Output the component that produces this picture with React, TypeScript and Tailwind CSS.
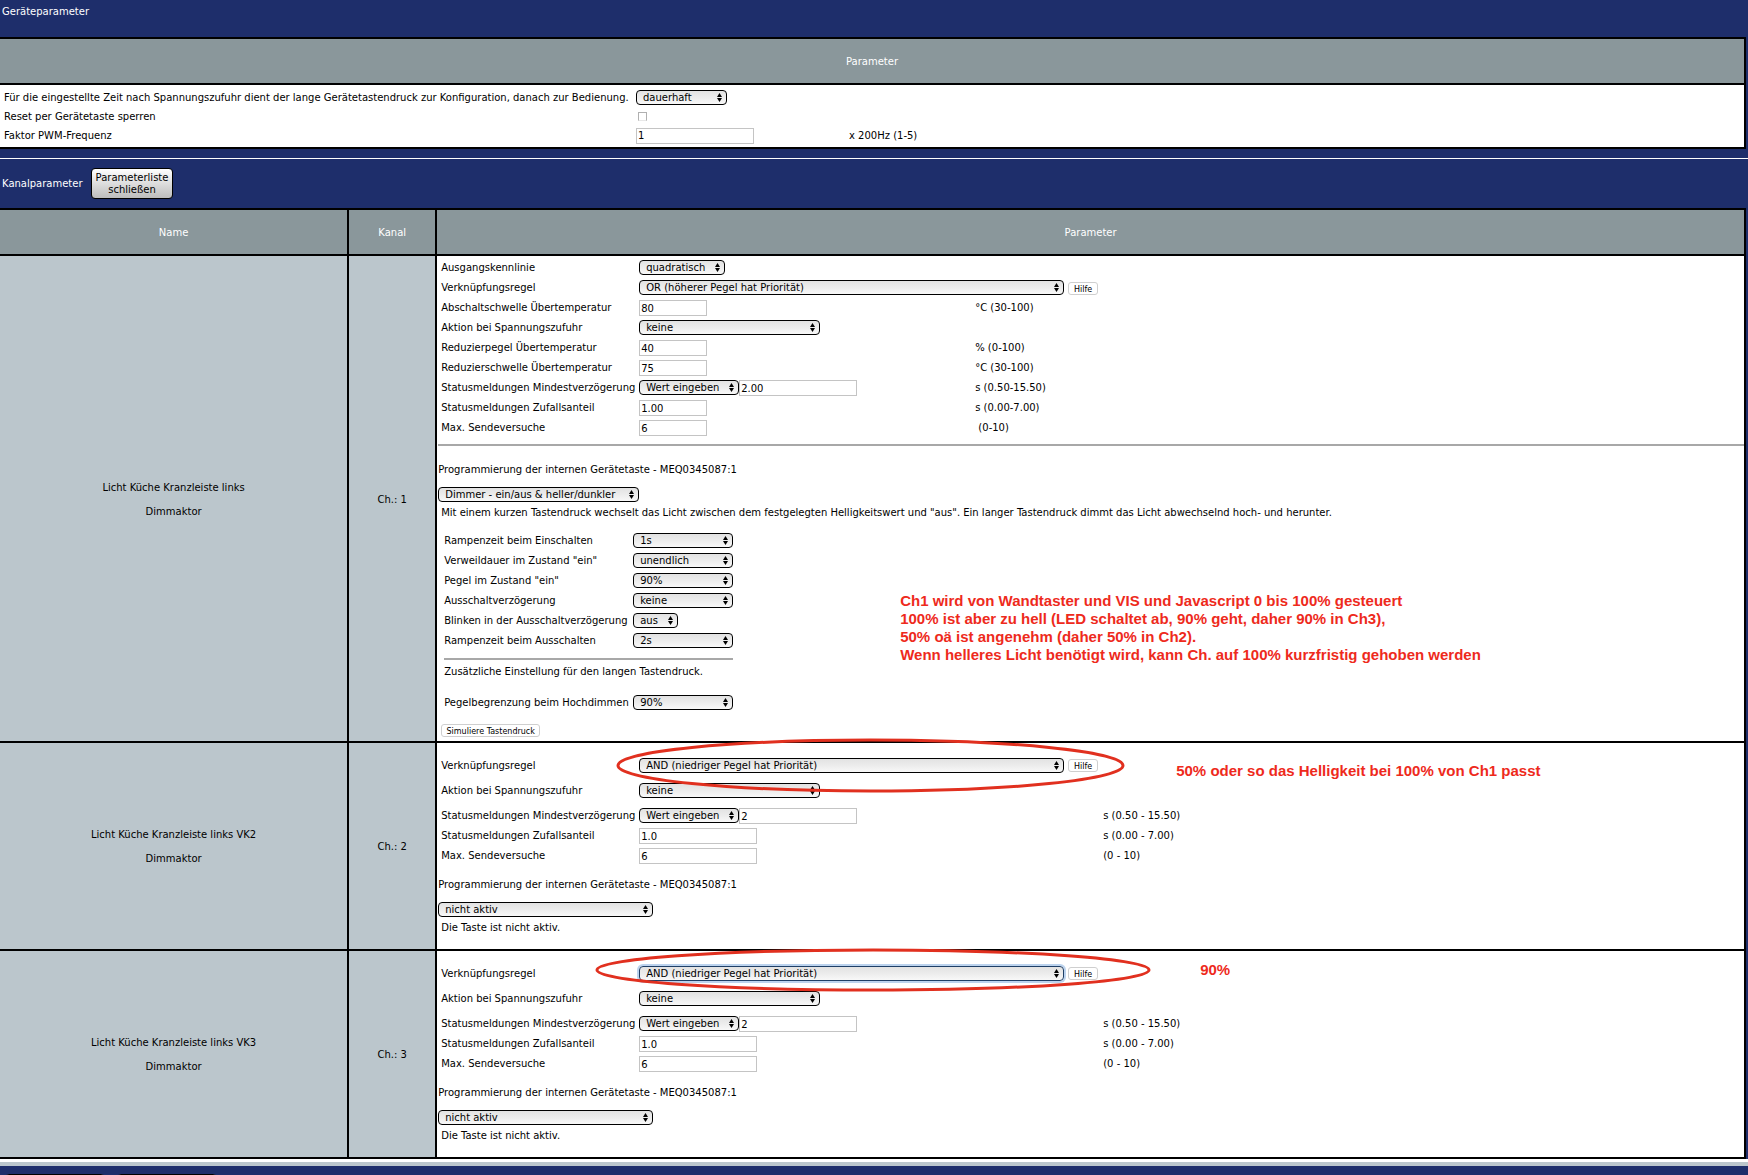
import { useId, type ReactNode } from 'react';
import clsx from 'clsx';

type SelectProps = {
  id?: string;
  label?: string;
  value: string;
  className: string;
  focused?: boolean;
};

function Select({ id, label, value, className, focused }: SelectProps) {
  return (
    <span className={clsx('relative mb-px inline-block h-[15px] shrink-0', className)}>
      <select
        id={id}
        aria-label={label}
        defaultValue={value}
        className={clsx(
          'block h-full w-full appearance-none rounded-[4px] border bg-linear-to-b from-[#e2e2e2] via-[#ececec] to-[#f8f8f8] pr-3 pl-[6px] text-[10px] leading-[13px] text-black outline-none',
          focused ? 'border-[#1f3f66] ring-2 ring-[#bcd3ee]' : 'border-black'
        )}
      >
        <option>{value}</option>
      </select>
      <svg viewBox="0 0 5 9" className="pointer-events-none absolute top-[3px] right-[5px] h-[9px] w-[5px]">
        <path d="M2.5 0 5 4H0zM2.5 9 0 5h5z" fill="#000" />
      </svg>
    </span>
  );
}

function TextInput({ id, label, value, className }: SelectProps) {
  return (
    <input
      id={id}
      aria-label={label}
      type="text"
      defaultValue={value}
      className={clsx(
        'block h-4 shrink-0 border border-[#c4c4c4] bg-white pl-px text-[10px] leading-[14px] text-black outline-none',
        className
      )}
    />
  );
}

function SmallButton({ children, className }: { children: ReactNode; className: string }) {
  return (
    <button
      type="button"
      className={clsx(
        'flex h-[13px] items-center justify-center rounded-[3px] border border-[#cfcfcf] bg-white pt-[2px] text-[8px] leading-[9px] whitespace-nowrap text-black',
        className
      )}
    >
      {children}
    </button>
  );
}

type Param = {
  label: string;
  kind: 'select' | 'input' | 'choice';
  value: string;
  width?: string;
  custom?: string;
  unit?: string;
  help?: boolean;
  focused?: boolean;
};

function ParamRow({ param, columns, height = 'h-5' }: { param: Param; columns: string; height?: string }) {
  const id = useId();
  return (
    <div className={clsx('grid items-center', columns, height)}>
      <label htmlFor={id} className="whitespace-nowrap">
        {param.label}
      </label>
      <div className="flex items-center">
        {param.kind === 'input' ? (
          <TextInput id={id} value={param.value} className={param.width ?? 'w-[118px]'} />
        ) : (
          <Select id={id} value={param.value} className={param.width ?? 'w-[100px]'} focused={param.focused} />
        )}
        {param.kind === 'choice' && (
          <TextInput label={`${param.label} Wert`} value={param.custom ?? ''} className="w-[118px]" />
        )}
        {param.help && <SmallButton className="ml-1 w-[30px] shrink-0">Hilfe</SmallButton>}
      </div>
      {param.unit && <span className="whitespace-nowrap">{param.unit}</span>}
    </div>
  );
}

const channelOne: Param[] = [
  { label: 'Ausgangskennlinie', kind: 'select', value: 'quadratisch', width: 'w-[86px]' },
  {
    label: 'Verknüpfungsregel',
    kind: 'select',
    value: 'OR (höherer Pegel hat Priorität)',
    width: 'w-[425px]',
    help: true,
  },
  { label: 'Abschaltschwelle Übertemperatur', kind: 'input', value: '80', width: 'w-[68px]', unit: '°C (30-100)' },
  { label: 'Aktion bei Spannungszufuhr', kind: 'select', value: 'keine', width: 'w-[181px]' },
  { label: 'Reduzierpegel Übertemperatur', kind: 'input', value: '40', width: 'w-[68px]', unit: '% (0-100)' },
  { label: 'Reduzierschwelle Übertemperatur', kind: 'input', value: '75', width: 'w-[68px]', unit: '°C (30-100)' },
  {
    label: 'Statusmeldungen Mindestverzögerung',
    kind: 'choice',
    value: 'Wert eingeben',
    custom: '2.00',
    unit: 's (0.50-15.50)',
  },
  { label: 'Statusmeldungen Zufallsanteil', kind: 'input', value: '1.00', width: 'w-[68px]', unit: 's (0.00-7.00)' },
  { label: 'Max. Sendeversuche', kind: 'input', value: '6', width: 'w-[68px]', unit: '\u00a0(0-10)' },
];

const buttonParams: Param[] = [
  { label: 'Rampenzeit beim Einschalten', kind: 'select', value: '1s' },
  { label: 'Verweildauer im Zustand "ein"', kind: 'select', value: 'unendlich' },
  { label: 'Pegel im Zustand "ein"', kind: 'select', value: '90%' },
  { label: 'Ausschaltverzögerung', kind: 'select', value: 'keine' },
  { label: 'Blinken in der Ausschaltverzögerung', kind: 'select', value: 'aus', width: 'w-[45px]' },
  { label: 'Rampenzeit beim Ausschalten', kind: 'select', value: '2s' },
];

const virtualParams: Param[] = [
  { label: 'Statusmeldungen Mindestverzögerung', kind: 'choice', value: 'Wert eingeben', custom: '2', unit: 's (0.50 - 15.50)' },
  { label: 'Statusmeldungen Zufallsanteil', kind: 'input', value: '1.0', unit: 's (0.00 - 7.00)' },
  { label: 'Max. Sendeversuche', kind: 'input', value: '6', unit: '(0 - 10)' },
];

const realColumns = 'grid-cols-[198px_336px_1fr]';
const virtualColumns = 'grid-cols-[198px_464px_1fr]';
const buttonColumns = 'grid-cols-[189px_1fr]';

function KeyProgram({ value, width, text }: { value: string; width: string; text: string }) {
  return (
    <div className="pl-px">
      <p>Programmierung der internen Gerätetaste - MEQ0345087:1</p>
      <div className="mt-[9px] flex">
        <Select label="Programmierung der internen Gerätetaste" value={value} className={width} />
      </div>
      <p className="mt-[2px] pl-[3px]">{text}</p>
    </div>
  );
}

function ChannelRow({ name, channel, children }: { name: string; channel: number; children: ReactNode }) {
  return (
    <tr>
      <td className="border-r-2 border-b-2 border-black bg-[#bbc6cc] pt-[2px] text-center leading-6">
        {name}
        <br />
        Dimmaktor
      </td>
      <td className="border-r-2 border-b-2 border-black bg-[#bbc6cc] pt-[2px] text-center">Ch.: {channel}</td>
      <td className="relative border-r-2 border-b-2 border-black bg-white align-top">{children}</td>
    </tr>
  );
}

function VirtualChannel({ focused }: { focused?: boolean }) {
  return (
    <div className="pt-[10px] pb-[13px]">
      <div className="pl-1">
        <ParamRow
          columns={virtualColumns}
          height="h-[25px]"
          param={{
            label: 'Verknüpfungsregel',
            kind: 'select',
            value: 'AND (niedriger Pegel hat Priorität)',
            width: 'w-[425px]',
            help: true,
            focused,
          }}
        />
        <ParamRow
          columns={virtualColumns}
          height="h-[25px]"
          param={{ label: 'Aktion bei Spannungszufuhr', kind: 'select', value: 'keine', width: 'w-[181px]' }}
        />
        <div className="pt-[3px] pb-[11px]">
          {virtualParams.map((param) => (
            <ParamRow key={param.label} param={param} columns={virtualColumns} />
          ))}
        </div>
      </div>
      <KeyProgram value="nicht aktiv" width="w-[215px]" text="Die Taste ist nicht aktiv." />
    </div>
  );
}

function Note({ children, className }: { children: ReactNode; className: string }) {
  return (
    <div
      className={clsx(
        "pointer-events-none absolute font-['Liberation_Sans',Arial,sans-serif] text-[15px] leading-[18px] font-bold whitespace-nowrap text-[#ee2a1c]",
        className
      )}
    >
      {children}
    </div>
  );
}

function Ring({ className }: { className: string }) {
  return (
    <svg
      viewBox="0 0 100 100"
      preserveAspectRatio="none"
      className={clsx('pointer-events-none absolute z-10 overflow-visible', className)}
    >
      <ellipse cx="50" cy="50" rx="50" ry="50" fill="none" stroke="#e1301f" strokeWidth="3" vectorEffect="non-scaling-stroke" />
    </svg>
  );
}

const headCell = 'h-[46px] border-r-2 border-b-2 border-black bg-[#8a979b] pt-[2px] text-center font-normal text-white';

export default function App() {
  const zeit = useId();
  const reset = useId();
  const pwm = useId();

  return (
    <div className="h-screen overflow-hidden bg-[#1e2e6b] font-['DejaVu_Sans',Verdana,sans-serif] text-[10px] leading-4 text-black">
      <section className="pr-[2px] pb-[9px]">
        <h2 className="h-[37px] pt-1 pl-[2px] text-white">Geräteparameter</h2>
        <table className="w-full border-separate border-spacing-0 border-t-2 border-black">
          <thead>
            <tr>
              <th className={headCell}>Parameter</th>
            </tr>
          </thead>
          <tbody>
            <tr>
              <td className="border-r-2 border-b-2 border-black bg-white px-1 pt-[3px] pb-[2px]">
                <div className="grid auto-rows-[19px] grid-cols-[632px_213px_1fr] items-center">
                  <label htmlFor={zeit} className="whitespace-nowrap">
                    Für die eingestellte Zeit nach Spannungszufuhr dient der lange Gerätetastendruck zur Konfiguration,
                    danach zur Bedienung.
                  </label>
                  <div className="col-span-2 flex">
                    <Select id={zeit} value="dauerhaft" className="w-[91px]" />
                  </div>
                  <label htmlFor={reset}>Reset per Gerätetaste sperren</label>
                  <div className="col-span-2 flex pl-[2px]">
                    <input
                      id={reset}
                      type="checkbox"
                      className="size-[9px] appearance-none border border-[#b0b0b0] border-b-[#e8e8e8] bg-white"
                    />
                  </div>
                  <label htmlFor={pwm}>Faktor PWM-Frequenz</label>
                  <TextInput id={pwm} value="1" className="w-[118px]" />
                  <span>x 200Hz (1-5)</span>
                </div>
              </td>
            </tr>
          </tbody>
        </table>
      </section>

      <section className="border-t border-white">
        <div className="flex h-[49px] items-center pl-[2px]">
          <h2 className="w-[89px] text-white">Kanalparameter</h2>
          <button
            type="button"
            className="h-[31px] w-[82px] rounded-[4px] border border-black bg-linear-to-b from-white to-[#bdbdbd] text-[10px] leading-3"
          >
            Parameterliste schließen
          </button>
        </div>
        <div className="pr-[2px]">
          <table className="w-full table-fixed border-separate border-spacing-0 border-t-2 border-black">
            <thead>
              <tr>
                <th className={clsx(headCell, 'w-[20%]')}>Name</th>
                <th className={clsx(headCell, 'w-[88px]')}>Kanal</th>
                <th className={headCell}>Parameter</th>
              </tr>
            </thead>
            <tbody>
              <ChannelRow name="Licht Küche Kranzleiste links" channel={1}>
                <div className="pt-[2px] pb-1">
                  <div className="pl-1">
                    {channelOne.map((param) => (
                      <ParamRow key={param.label} param={param} columns={realColumns} />
                    ))}
                  </div>
                  <hr className="mt-[6px] mb-4 ml-px border-t-2 border-[#a8a8a8]" />
                  <KeyProgram
                    value="Dimmer - ein/aus & heller/dunkler"
                    width="w-[201px]"
                    text={
                      'Mit einem kurzen Tastendruck wechselt das Licht zwischen dem festgelegten Helligkeitswert und "aus". Ein langer Tastendruck dimmt das Licht abwechselnd hoch- und herunter.'
                    }
                  />
                  <div className="mt-[10px] w-[296px] pl-[7px]">
                    {buttonParams.map((param) => (
                      <ParamRow key={param.label} param={param} columns={buttonColumns} />
                    ))}
                    <hr className="mt-[7px] mb-1 border-t-2 border-[#a8a8a8]" />
                    <p className="mb-[13px]">Zusätzliche Einstellung für den langen Tastendruck.</p>
                    <ParamRow
                      param={{ label: 'Pegelbegrenzung beim Hochdimmen', kind: 'select', value: '90%' }}
                      columns={buttonColumns}
                    />
                  </div>
                  <div className="mt-[11px] pl-1">
                    <SmallButton className="w-[99px]">Simuliere Tastendruck</SmallButton>
                  </div>
                </div>
                <Note className="top-[336px] left-[463px]">
                  Ch1 wird von Wandtaster und VIS und Javascript 0 bis 100% gesteuert
                  <br />
                  100% ist aber zu hell (LED schaltet ab, 90% geht, daher 90% in Ch3),
                  <br />
                  50% oä ist angenehm (daher 50% in Ch2).
                  <br />
                  Wenn helleres Licht benötigt wird, kann Ch. auf 100% kurzfristig gehoben werden
                </Note>
              </ChannelRow>
              <ChannelRow name="Licht Küche Kranzleiste links VK2" channel={2}>
                <VirtualChannel />
                <Ring className="top-[-3px] left-[181px] h-[51px] w-[505px]" />
                <Note className="top-[19px] left-[739px]">50% oder so das Helligkeit bei 100% von Ch1 passt</Note>
              </ChannelRow>
              <ChannelRow name="Licht Küche Kranzleiste links VK3" channel={3}>
                <VirtualChannel focused />
                <Ring className="top-[-1px] left-[160px] h-[40px] w-[552px]" />
                <Note className="top-[10px] left-[763px]">90%</Note>
              </ChannelRow>
            </tbody>
          </table>
        </div>
      </section>

      <footer className="border-t-[3px] border-white">
        <div className="flex gap-3 border-t-4 border-[#bbc6cc] px-[5px] pt-2">
          <button type="button" aria-label="Abbrechen" className="h-6 w-[100px] rounded-[4px] border border-black bg-[#c8c8c8]" />
          <button type="button" aria-label="Übernehmen" className="h-6 w-[100px] rounded-[4px] border border-black bg-[#c8c8c8]" />
        </div>
      </footer>
    </div>
  );
}
